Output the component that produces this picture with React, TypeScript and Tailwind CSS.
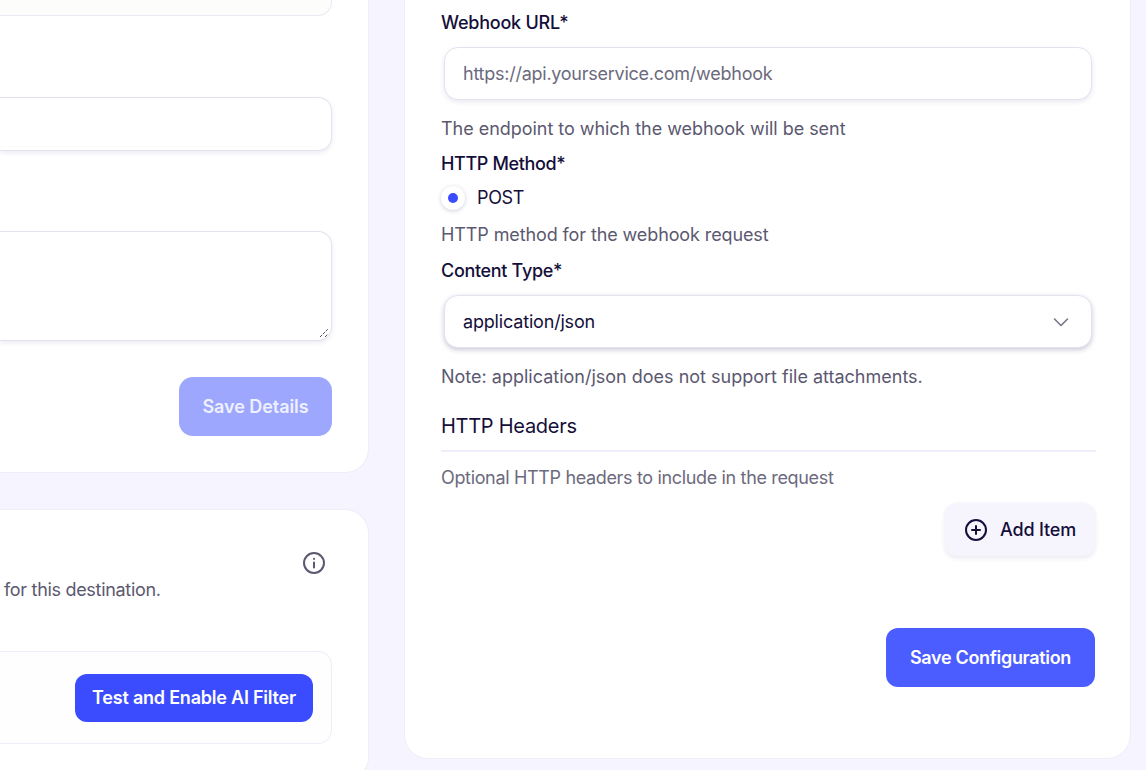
import React from "react";

const font = "[font-family:Inter,'Liberation_Sans',sans-serif]";

export default function App() {
  return (
    <div className={`${font} w-[1146px] h-[770px] overflow-hidden bg-[#f5f4ff] flex items-start gap-[35px] pr-[16px] antialiased`}>
      {/* Left column */}
      <div className="w-[369px] shrink-0 flex flex-col gap-[36px] -mt-[40px]">
        <section className="h-[513px] bg-white border border-l-0 border-[#eeedf8] rounded-r-[24px] pr-[36px] pb-[36px] flex flex-col items-stretch">
          <div className="h-[55px] shrink-0 bg-[#fdfdfb] border border-l-0 border-[#e9e8f3] rounded-r-[14px]" />
          <div className="h-[54px] mt-[81px] shrink-0 bg-white border border-l-0 border-[#e4e2f1] rounded-r-[14px] shadow-[0_2px_5px_rgba(40,30,100,0.09)]" />
          <div className="h-[110px] mt-[80px] shrink-0 relative bg-white border border-l-0 border-[#e4e2f1] rounded-r-[14px] shadow-[0_2px_5px_rgba(40,30,100,0.09)]">
            <svg className="absolute right-[2px] bottom-[2px]" width="10" height="10" viewBox="0 0 10 10" fill="none" stroke="#555" strokeWidth="1">
              <path d="M1 9 L9 1 M6 9 L9 6" strokeDasharray="3 1" />
            </svg>
          </div>
          <div className="flex justify-end mt-[36px]">
            <button className="w-[153px] h-[59px] rounded-[14px] bg-[#9ca7fd] text-[#eef0ff] text-[18px] font-semibold tracking-[-0.003em]">Save Details</button>
          </div>
        </section>
        <section className="h-[272px] bg-white border border-l-0 border-[#eeedf8] rounded-r-[24px] pr-[36px] flex flex-col">
          <div className="flex justify-end pt-[41px] pr-[6px] text-[#5b5870]">
            <svg width="24" height="24" viewBox="0 0 24 24" fill="none" stroke="currentColor" strokeWidth="2" strokeLinecap="round">
              <circle cx="12" cy="12" r="10" />
              <path d="M12 16.5v-5M12 7.8v.1" />
            </svg>
          </div>
          <p className="pl-[4px] mt-[1px] text-[18px] leading-[28px] text-[#5b5870] tracking-[-0.017em]">for this destination.</p>
          <div className="mt-[47px] h-[93px] bg-[#fefeff] border border-l-0 border-[#eeedf8] rounded-r-[14px] flex items-center justify-end pr-[18px]">
            <button className="w-[238px] h-[48px] rounded-[12px] bg-[#3b4cff] text-white text-[18px] font-semibold tracking-[-0.012em]">Test and Enable AI Filter</button>
          </div>
        </section>
      </div>

      {/* Right panel */}
      <section className="w-[727px] h-[799px] -mt-[40px] shrink-0 bg-white border border-[#eeedf8] rounded-[24px] pl-[36px] pr-[34px] flex flex-col text-[#140f3a]">
        <label className="mt-[48px] h-[28px] text-[18px] leading-[28px] font-[450] tracking-[-0.013em]">Webhook URL*</label>
        <div className="mt-[10px] ml-[3px] mr-[4px] h-[53px] shrink-0 flex items-center px-[18px] bg-white border border-[#e4e2f1] rounded-[14px] shadow-[0_2px_5px_rgba(40,30,100,0.1)] text-[18px] text-[#6c6a7e] tracking-[-0.014em]">https://api.yourservice.com/webhook</div>
        <p className="mt-[15px] h-[28px] text-[18px] leading-[28px] text-[#5b5870] tracking-[-0.002em]">The endpoint to which the webhook will be sent</p>
        <label className="mt-[7px] h-[28px] text-[18px] leading-[28px] font-[450] tracking-[-0.02em]">HTTP Method*</label>
        <div className="mt-[6px] h-[28px] flex items-center gap-[12px]">
          <span className="w-[24px] h-[24px] rounded-full bg-white shadow-[0_1px_4px_rgba(40,30,100,0.22)] flex items-center justify-center">
            <span className="w-[10px] h-[10px] rounded-full bg-[#3b4cff]" />
          </span>
          <span className="text-[18px] leading-[28px] tracking-[-0.02em]">POST</span>
        </div>
        <p className="mt-[9px] h-[28px] text-[18px] leading-[28px] text-[#5b5870] tracking-[-0.006em]">HTTP method for the webhook request</p>
        <label className="mt-[8px] h-[28px] text-[18px] leading-[28px] font-[450] tracking-[-0.018em]">Content Type*</label>
        <div className="mt-[10px] ml-[3px] mr-[4px] h-[53px] shrink-0 flex items-center justify-between pl-[18px] pr-[21px] bg-white border border-[#e4e2f1] rounded-[14px] shadow-[0_2px_5px_rgba(40,30,100,0.24)] text-[18px] tracking-[-0.01em]">
          <span>application/json</span>
          <svg width="18" height="18" viewBox="0 0 18 18" fill="none" stroke="#77758a" strokeWidth="1.6" strokeLinecap="round" strokeLinejoin="round">
            <path d="M2.5 6 L9 12.5 L15.5 6" />
          </svg>
        </div>
        <p className="mt-[15px] h-[28px] text-[18px] leading-[28px] text-[#5b5870] tracking-[0em]">Note: application/json does not support file attachments.</p>
        <h3 className="mt-[21px] h-[28px] text-[20px] leading-[28px] font-normal tracking-[-0.0135em]">HTTP Headers</h3>
        <div className="mt-[10px] h-[2px] bg-[#eeedfa]" />
        <p className="mt-[12px] h-[28px] text-[18px] leading-[28px] text-[#6c6a7e] tracking-[-0.019em]">Optional HTTP headers to include in the request</p>
        <div className="flex justify-end mt-[11px] pr-[1px]">
          <button className="w-[150px] h-[53px] rounded-[12px] bg-[#f6f5fd] shadow-[0_2px_5px_rgba(40,30,100,0.1)] flex items-center justify-center gap-[12px] text-[18px] font-[450] tracking-[-0.01em]">
            <svg width="24" height="24" viewBox="0 0 24 24" fill="none" stroke="currentColor" strokeWidth="2" strokeLinecap="round">
              <circle cx="12" cy="12" r="10" />
              <path d="M12 8v8M8 12h8" />
            </svg>
            Add Item
          </button>
        </div>
        <div className="flex justify-end mt-[72px] pr-[1px]">
          <button className="w-[209px] h-[59px] rounded-[12px] bg-[#4c5dff] text-white text-[18px] font-semibold tracking-[-0.018em]">Save Configuration</button>
        </div>
      </section>
    </div>
  );
}
